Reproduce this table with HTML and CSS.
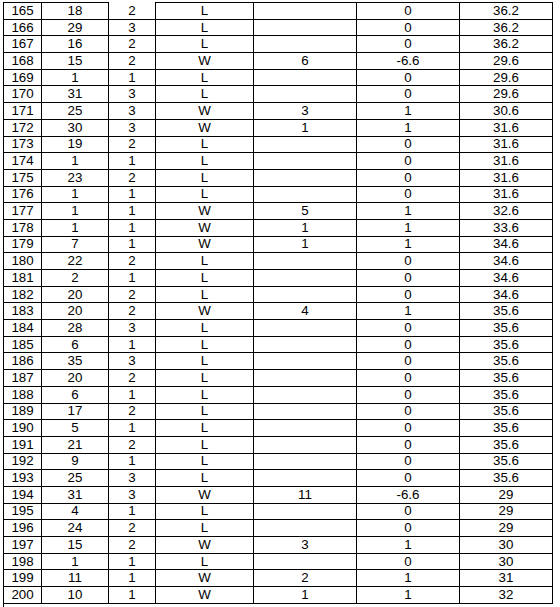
FILE: index.html
```html
<!DOCTYPE html>
<html>
<head>
<meta charset="utf-8">
<link rel="stylesheet" href="styles.css">
</head>
<body>
<div class="sheet">
<table class="grid">
<colgroup><col class="c1"><col class="c2"><col class="c3"><col class="c4"><col class="c5"><col class="c6"><col class="c7"></colgroup>
<tbody>
<tr class="first"><td>165</td><td>18</td><td class="open">2</td><td>L</td><td></td><td>0</td><td>36.2</td></tr>
<tr><td>166</td><td>29</td><td>3</td><td>L</td><td></td><td>0</td><td>36.2</td></tr>
<tr><td>167</td><td>16</td><td>2</td><td>L</td><td></td><td>0</td><td>36.2</td></tr>
<tr><td>168</td><td>15</td><td>2</td><td>W</td><td>6</td><td>-6.6</td><td>29.6</td></tr>
<tr><td>169</td><td>1</td><td>1</td><td>L</td><td></td><td>0</td><td>29.6</td></tr>
<tr><td>170</td><td>31</td><td>3</td><td>L</td><td></td><td>0</td><td>29.6</td></tr>
<tr><td>171</td><td>25</td><td>3</td><td>W</td><td>3</td><td>1</td><td>30.6</td></tr>
<tr><td>172</td><td>30</td><td>3</td><td>W</td><td>1</td><td>1</td><td>31.6</td></tr>
<tr><td>173</td><td>19</td><td>2</td><td>L</td><td></td><td>0</td><td>31.6</td></tr>
<tr><td>174</td><td>1</td><td>1</td><td>L</td><td></td><td>0</td><td>31.6</td></tr>
<tr><td>175</td><td>23</td><td>2</td><td>L</td><td></td><td>0</td><td>31.6</td></tr>
<tr><td>176</td><td>1</td><td>1</td><td>L</td><td></td><td>0</td><td>31.6</td></tr>
<tr><td>177</td><td>1</td><td>1</td><td>W</td><td>5</td><td>1</td><td>32.6</td></tr>
<tr><td>178</td><td>1</td><td>1</td><td>W</td><td>1</td><td>1</td><td>33.6</td></tr>
<tr><td>179</td><td>7</td><td>1</td><td>W</td><td>1</td><td>1</td><td>34.6</td></tr>
<tr><td>180</td><td>22</td><td>2</td><td>L</td><td></td><td>0</td><td>34.6</td></tr>
<tr><td>181</td><td>2</td><td>1</td><td>L</td><td></td><td>0</td><td>34.6</td></tr>
<tr><td>182</td><td>20</td><td>2</td><td>L</td><td></td><td>0</td><td>34.6</td></tr>
<tr><td>183</td><td>20</td><td>2</td><td>W</td><td>4</td><td>1</td><td>35.6</td></tr>
<tr><td>184</td><td>28</td><td>3</td><td>L</td><td></td><td>0</td><td>35.6</td></tr>
<tr><td>185</td><td>6</td><td>1</td><td>L</td><td></td><td>0</td><td>35.6</td></tr>
<tr><td>186</td><td>35</td><td>3</td><td>L</td><td></td><td>0</td><td>35.6</td></tr>
<tr><td>187</td><td>20</td><td>2</td><td>L</td><td></td><td>0</td><td>35.6</td></tr>
<tr><td>188</td><td>6</td><td>1</td><td>L</td><td></td><td>0</td><td>35.6</td></tr>
<tr><td>189</td><td>17</td><td>2</td><td>L</td><td></td><td>0</td><td>35.6</td></tr>
<tr><td>190</td><td>5</td><td>1</td><td>L</td><td></td><td>0</td><td>35.6</td></tr>
<tr><td>191</td><td>21</td><td>2</td><td>L</td><td></td><td>0</td><td>35.6</td></tr>
<tr><td>192</td><td>9</td><td>1</td><td>L</td><td></td><td>0</td><td>35.6</td></tr>
<tr><td>193</td><td>25</td><td>3</td><td>L</td><td></td><td>0</td><td>35.6</td></tr>
<tr><td>194</td><td>31</td><td>3</td><td>W</td><td>11</td><td>-6.6</td><td>29</td></tr>
<tr><td>195</td><td>4</td><td>1</td><td>L</td><td></td><td>0</td><td>29</td></tr>
<tr><td>196</td><td>24</td><td>2</td><td>L</td><td></td><td>0</td><td>29</td></tr>
<tr><td>197</td><td>15</td><td>2</td><td>W</td><td>3</td><td>1</td><td>30</td></tr>
<tr><td>198</td><td>1</td><td>1</td><td>L</td><td></td><td>0</td><td>30</td></tr>
<tr><td>199</td><td>11</td><td>1</td><td>W</td><td>2</td><td>1</td><td>31</td></tr>
<tr><td>200</td><td>10</td><td>1</td><td>W</td><td>1</td><td>1</td><td>32</td></tr>
</tbody>
</table>
</div>
</body>
</html>
```

FILE: styles.css
```css
html, body {
  margin: 0;
  padding: 0;
  background: #fff;
}
.sheet {
  margin: 2px 0 0 3px;
  height: 605px;
  border-left: 1px solid #000;
  box-sizing: border-box;
}
.grid {
  border-collapse: collapse;
  table-layout: fixed;
  width: 549px;
  margin-left: -1px;
  font-family: "Liberation Sans", Arial, sans-serif;
  font-size: 13.33px;
  color: #000;
}
.c1 { width: 38px; }
.c2 { width: 67px; }
.c3 { width: 47px; }
.c4 { width: 98px; }
.c5 { width: 103px; }
.c6 { width: 103px; }
.c7 { width: 93px; }
.grid tr {
  height: 16.69px;
}
.grid td {
  border: 1px solid #000;
  padding: 0;
  text-align: center;
  vertical-align: middle;
  line-height: 14px;
  white-space: nowrap;
}
.grid .first .open {
  border-top-style: none;
}
```
